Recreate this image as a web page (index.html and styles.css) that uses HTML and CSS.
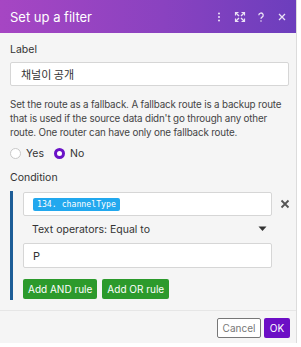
FILE: index.html
```html
<!DOCTYPE html>
<html>
<head>
<meta charset="utf-8">
<link rel="stylesheet" href="styles.css">
</head>
<body>
<div class="dialog">
  <div class="header">
    <div class="title">Set up a filter</div>
    <div class="hicons">
      <svg width="12" height="12" viewBox="0 0 12 12"><circle cx="6" cy="2.5" r="1" fill="#fff"/><circle cx="6" cy="6" r="1" fill="#fff"/><circle cx="6" cy="9.5" r="1" fill="#fff"/></svg>
      <svg width="12" height="12" viewBox="0 0 12 12" fill="none" stroke="#fff" stroke-width="1.4"><path d="M2 2l3 3M10 2L7 5M2 10l3-3M10 10L7 7"/><path d="M1.5 4.5V1.5h3M7.5 1.5h3v3M1.5 7.5v3h3M7.5 10.5h3v-3" stroke-width="1.2"/></svg>
      <svg width="12" height="12" viewBox="0 0 12 12" fill="none" stroke="#fff" stroke-width="1.3"><path d="M3.8 4.2a2.2 2.2 0 1 1 3.3 1.9C6.4 6.5 6 7 6 7.8"/><circle cx="6" cy="10" r="0.8" fill="#fff" stroke="none"/></svg>
      <svg width="12" height="12" viewBox="0 0 12 12" fill="none" stroke="#fff" stroke-width="1.3"><path d="M3 3l6 6M9 3l-6 6"/></svg>
    </div>
  </div>
  <div class="body">
    <div class="lbl">Label</div>
    <div class="input kr">채널이 공개</div>
    <p class="desc">Set the route as a fallback. A fallback route is a backup route that is used if the source data didn't go through any other route. One router can have only one fallback route.</p>
    <div class="radios">
      <span class="radio"></span><span class="rtext">Yes</span>
      <span class="radio on"></span><span class="rtext">No</span>
    </div>
    <div class="lbl cond">Condition</div>
    <div class="rule">
      <div class="rowx">
        <div class="input field"><span class="pill">134. channelType</span></div>
        <svg class="del" width="10" height="10" viewBox="0 0 10 10" fill="none" stroke="#555" stroke-width="1.8"><path d="M1.5 1.5l7 7M8.5 1.5l-7 7"/></svg>
      </div>
      <div class="op">
        <span>Text operators: Equal to</span>
        <svg width="9" height="6" viewBox="0 0 9 6"><path d="M0.5 0.5h8L4.5 5z" fill="#333"/></svg>
      </div>
      <div class="input field val">P</div>
      <div class="btns">
        <span class="gbtn">Add AND rule</span>
        <span class="gbtn">Add OR rule</span>
      </div>
    </div>
  </div>
  <div class="footer">
    <span class="cancel">Cancel</span>
    <span class="ok">OK</span>
  </div>
</div>
</body>
</html>
```
FILE: styles.css
```css
html, body { margin: 0; padding: 0; background: #fff; }
body { font-family: Inter, "Noto Sans", sans-serif; color: #333; width: 301px; height: 347px; overflow: hidden; }
.dialog { width: 297px; height: 343px; background: #f5f5f5; border-right: 1px solid #dcdcdc; box-sizing: border-box; display: flex; flex-direction: column; }
.header { height: 33px; flex: none; display: flex; align-items: center; justify-content: space-between; padding: 0 8px 0 10px; background: linear-gradient(to right, #a646c3, #8a42c0 55%, #6c3ebd); }
.title { color: #fff; font-size: 13px; }
.hicons { display: flex; gap: 9px; align-items: center; opacity: 0.85; }
.body { padding: 10px 4px 0 10px; flex: 1; }
.lbl { font-size: 10.5px; line-height: 14px; color: #333; }
.input { background: #fff; border: 1px solid #d6d6d6; border-radius: 2px; height: 24px; box-sizing: border-box; display: flex; align-items: center; padding: 0 10px; font-size: 11px; color: #333; }
.body > .input { margin-top: 5px; width: 279px; }
.kr { font-family: "Noto Sans CJK KR", sans-serif; }
.desc { margin: 12px 0 0; font-size: 9.8px; letter-spacing: -0.15px; line-height: 14px; color: #444; }
.radios { display: flex; align-items: center; margin-top: 6px; height: 14px; font-size: 10.5px; }
.radio { width: 11px; height: 11px; border-radius: 50%; border: 1px solid #c8c8c8; background: #fff; box-sizing: border-box; margin-right: 5px; }
.radio.on { border: 3.5px solid #6a12c7; }
.rtext { margin-right: 10px; }
.cond { margin-top: 11px; }
.rule { margin-top: 6px; border-left: 3px solid #1d5d97; padding: 1px 0 1px 10px; }
.rowx { display: flex; align-items: center; }
.field { width: 249px; padding-left: 9px; }
.del { margin-left: 8px; }
.pill { background: #22a8ee; color: #fff; font-family: "DejaVu Sans Mono", monospace; font-size: 8.2px; padding: 1px 4px; border-radius: 2px; line-height: 11px; }
.op { width: 249px; display: flex; justify-content: space-between; align-items: center; font-size: 10.5px; height: 14px; margin-top: 6px; padding-left: 9px; padding-right: 5px; box-sizing: border-box; }
.val { margin-top: 7px; height: 25px; }
.btns { display: flex; gap: 5px; margin-top: 11px; }
.gbtn { background: #2c9a2c; color: #fff; font-size: 10px; height: 20px; line-height: 20px; padding: 0 5px; border-radius: 2px; }
.footer { flex: none; border-top: 1px solid #e6e6e6; height: 33px; display: flex; justify-content: flex-end; align-items: flex-start; gap: 3px; padding: 7px 6px 0 0; box-sizing: border-box; }
.cancel { border: 1px solid #777; background: #fff; color: #777; font-size: 10px; height: 20px; width: 44px; box-sizing: border-box; display: flex; align-items: center; justify-content: center; border-radius: 2px; }
.ok { background: #6c0ec5; color: #fff; font-size: 10px; height: 20px; width: 26px; display: flex; align-items: center; justify-content: center; border-radius: 2px; }
```
